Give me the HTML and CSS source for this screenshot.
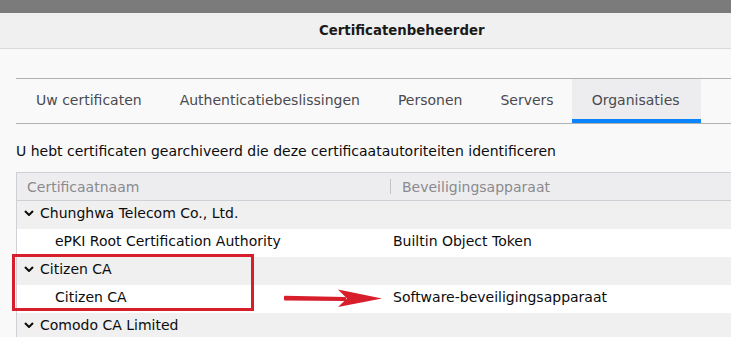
FILE: index.html
```html
<!DOCTYPE html>
<html lang="nl">
<head>
    <meta charset="UTF-8">
    <title>Certificatenbeheerder</title>
    <link rel="stylesheet" href="styles.css">
</head>
<body>

<div class="topbar"></div>
<div class="titlebar"><span class="title">Certificatenbeheerder</span></div>

<div class="content">
    <div class="tabs">
        <div class="tab">Uw certificaten</div>
        <div class="tab">Authenticatiebeslissingen</div>
        <div class="tab">Personen</div>
        <div class="tab">Servers</div>
        <div class="tab active">Organisaties</div>
    </div>

    <p class="intro">U hebt certificaten gearchiveerd die deze certificaatautoriteiten identificeren</p>

    <div class="tree">
        <div class="tree-head">
            <div class="col-name">Certificaatnaam</div>
            <div class="col-device"><span class="sep"></span>Beveiligingsapparaat</div>
        </div>
        <div class="row group">
            <div class="col-name"><svg class="chev" width="10" height="6" viewBox="0 0 10 6"><polyline points="1,1 5,5 9,1"/></svg>Chunghwa Telecom Co., Ltd.</div>
            <div class="col-device"></div>
        </div>
        <div class="row child">
            <div class="col-name">ePKI Root Certification Authority</div>
            <div class="col-device">Builtin Object Token</div>
        </div>
        <div class="row group">
            <div class="col-name"><svg class="chev" width="10" height="6" viewBox="0 0 10 6"><polyline points="1,1 5,5 9,1"/></svg>Citizen CA</div>
            <div class="col-device"></div>
        </div>
        <div class="row child">
            <div class="col-name">Citizen CA</div>
            <div class="col-device">Software-beveiligingsapparaat</div>
        </div>
        <div class="row group">
            <div class="col-name"><svg class="chev" width="10" height="6" viewBox="0 0 10 6"><polyline points="1,1 5,5 9,1"/></svg>Comodo CA Limited</div>
            <div class="col-device"></div>
        </div>
    </div>
</div>

<!-- annotation: highlight box and arrow -->
<div class="highlight"></div>
<svg class="arrow" width="104" height="20" viewBox="0 0 104 20">
    <path d="M2 8.8 L62 10 L62 12 L2 11.6 Z" fill="#d71f2b" stroke="#d71f2b" stroke-width="2" stroke-linejoin="round"/>
    <path d="M55 1.5 L99 10.5 L55 19 L64 10.5 Z" fill="#d71f2b"/>
</svg>

</body>
</html>
```

FILE: styles.css
```css
body {
    margin: 0;
    font-family: "DejaVu Sans", sans-serif;
    font-size: 14px;
    background: #f9f9fa;
    color: #0c0c0d;
    overflow: hidden;
}

.topbar {
    height: 13px;
    background: #7b7b7b;
}

.titlebar {
    height: 35px;
    background: #f0f0f0;
    border-bottom: 1px solid #dadade;
    display: flex;
    align-items: center;
    padding-left: 319px;
}
.title {
    font-weight: bold;
    font-size: 13.3px;
    color: #1a1a1a;
}

.content {
    padding: 29px 0 0 16px;
}

.tabs {
    display: flex;
    border-top: 1px solid #b1b1b3;
    border-bottom: 1px solid #b1b1b3;
    height: 44px;
}
.tab {
    display: flex;
    align-items: center;
    padding: 0 18px 2px 20px;
    color: #4a4a4f;
    white-space: nowrap;
}
.tab.active {
    background: #ededf0;
    padding-right: 21px;
    box-shadow: inset 0 -4px 0 #0a84ff;
}

.intro {
    margin: 19px 0 13px 0;
    line-height: 16px;
    white-space: nowrap;
}

.tree {
    border-top: 1px solid #cfcfd6;
    border-left: 1px solid #cfcfd6;
}
.tree-head {
    display: flex;
    height: 27px;
    background: #ededf0;
    border-bottom: 1px solid #cfcfd6;
    color: #8a8a8e;
}
.tree-head .col-name {
    padding-left: 10px;
    width: 363px;
}
.sep {
    display: inline-block;
    width: 1px;
    height: 15px;
    background: #c4c4c8;
    margin-right: 11px;
}
.col-name {
    display: flex;
    align-items: center;
    white-space: nowrap;
}
.col-device {
    flex: 1;
    display: flex;
    align-items: center;
    white-space: nowrap;
}

.row {
    display: flex;
    height: 28px;
    line-height: 16px;
}
.row.group {
    background: #f0f0f0;
}
.row.child {
    background: #ffffff;
}
.row.group .col-name {
    padding-left: 7px;
    width: 369px;
}
.row.child .col-name {
    padding-left: 38px;
    width: 338px;
}
.row .col-name, .row .col-device {
    padding-bottom: 5px;
}
.chev {
    margin-right: 6px;
    fill: none;
    stroke: #0c0c0d;
    stroke-width: 2;
}

.highlight {
    position: absolute;
    left: 12px;
    top: 254px;
    width: 236px;
    height: 51px;
    border: 3px solid #d71f2b;
}

.arrow {
    position: absolute;
    left: 283px;
    top: 288px;
}
```
